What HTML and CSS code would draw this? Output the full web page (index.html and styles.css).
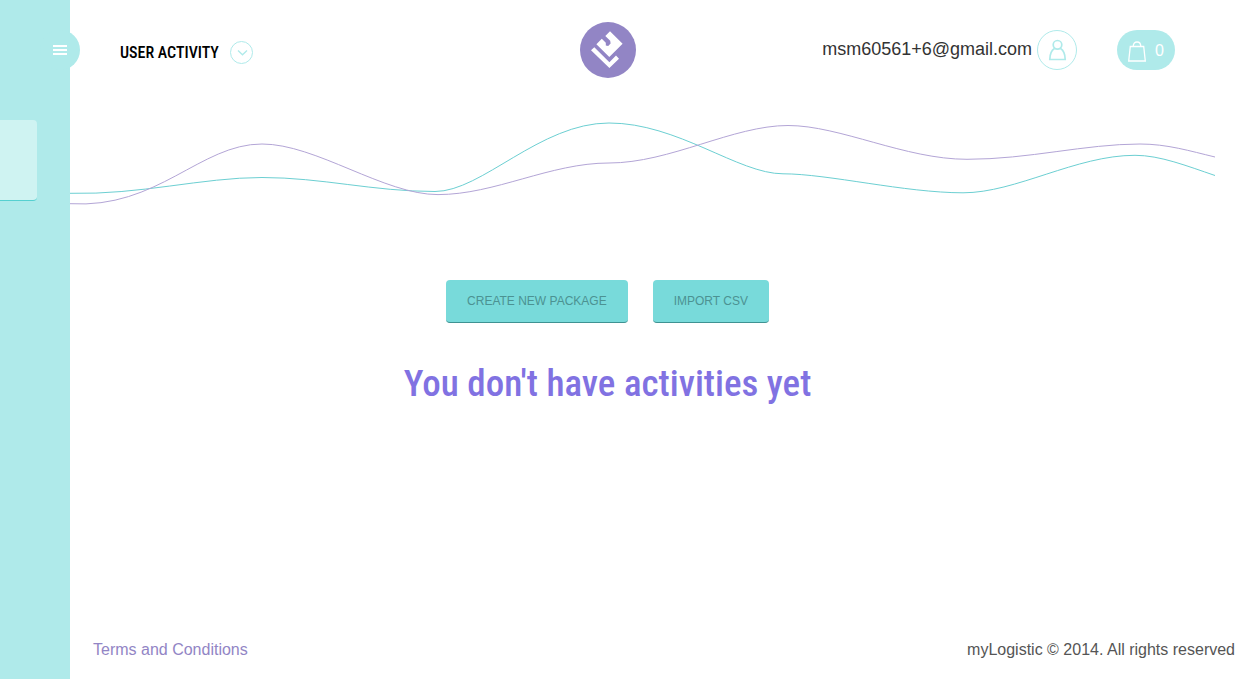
FILE: index.html
```html
<!DOCTYPE html>
<html lang="en">
<head>
<meta charset="utf-8">
<meta name="viewport" content="width=device-width, initial-scale=1">
<title>myLogistic - User activity</title>
<link rel="stylesheet" href="styles.css">
</head>
<body>
<aside class="drawer">
  <button class="drawer-toggle" type="button" aria-label="Open menu">
    <svg class="toggle-icon" viewBox="0 0 14 10" aria-hidden="true"><path d="M0 1h14M0 5h14M0 9h14"/></svg>
  </button>
  <div class="drawer-item"></div>
</aside>
<div class="page">
  <header class="header">
    <div class="title-group">
      <h1 class="title">USER ACTIVITY</h1>
      <button class="title-toggle" type="button" aria-label="Show options">
        <svg class="chevron-icon" viewBox="0 0 23 23" aria-hidden="true"><circle cx="11.5" cy="11.5" r="11"/><path d="M8 9.500l4.500 4.300 4.500-4.300" stroke-width="1.300"/></svg>
      </button>
    </div>
    <a class="logo" href="#" aria-label="myLogistic">
      <svg class="logo-icon" viewBox="0 0 56 56" aria-hidden="true">
        <circle cx="28" cy="28" r="28" fill="#9285c5"/>
        <path fill="#fff" d="M30 9.200 42.600 21.800 29.300 35.100 16.400 22.200 21.800 16.800 25.800 20.800 25.800 23.400 28.200 24 30.600 21.600 30.200 18.800 25.300 13.900z"/>
        <path fill="#fff" d="M14.300 25.300 29.400 40.200 36 33.600 39 36.700 29.400 46 11 28.300z"/>
      </svg>
    </a>
    <div class="account">
      <span class="email">msm60561+6@gmail.com</span>
      <a class="profile" href="#" aria-label="Profile">
        <svg class="profile-icon" viewBox="0 0 40 40" aria-hidden="true"><circle cx="20" cy="20" r="19.500" stroke-width="1"/><circle cx="20.500" cy="14.800" r="4.300"/><path d="M17.500 18.500c-3 1.800-4.600 5-4.700 11h15.400c-.1-6-1.700-9.200-4.700-11"/></svg>
      </a>
      <a class="cart" href="#" aria-label="Cart, 0 items">
        <svg class="cart-icon" viewBox="0 0 18 21" aria-hidden="true"><path d="M2.300 5.500h13.400l1.600 14.500H.7zM5.200 5.500C5.200 2.300 7 1 9 1s3.800 1.300 3.800 4.500"/></svg>
        <span>0</span>
      </a>
    </div>
  </header>
  <main class="content">
    <svg class="chart" viewBox="70 110 1145 110" preserveAspectRatio="none" role="img" aria-label="Activity chart">
      <path class="line-teal" d="M70 193.300C140 195 202 177.500 262 177.500S373 191.500 435 191.500C482 191.500 540 123 609 123S738 173.800 783 173.800S905 192.800 963 192.800C1016 192.800 1076 155.300 1135 155.300C1160 155.300 1187 166 1215 175.500"/>
      <path class="line-violet" d="M70 203.700C158 209 200 144 262 144C316 144 384 194.600 438 194.600C495 194.600 550 163 609 163C670 163 733 125.500 788 125.500C840 125.500 905 159.300 967 159.300S1085 144 1140 144C1167 144 1190 151 1215 157"/>
    </svg>
    <div class="actions">
      <button class="action" type="button">CREATE NEW PACKAGE</button>
      <button class="action" type="button">IMPORT CSV</button>
    </div>
    <h2 class="empty">You don't have activities yet</h2>
  </main>
  <footer class="footer">
    <a class="terms" href="#">Terms and Conditions</a>
    <span>myLogistic © 2014. All rights reserved</span>
  </footer>
</div>
</body>
</html>
```

FILE: styles.css
```css
* {
  box-sizing: border-box;
}

body {
  margin: 0;
  font-family: "Liberation Sans", Arial, sans-serif;
  color: #333;
  background: #fff;
}

button {
  padding: 0;
  border: 0;
  font-family: inherit;
  cursor: pointer;
}

a {
  text-decoration: none;
}

svg {
  display: block;
  fill: none;
}

/* The menu drawer lies over the page's left edge. */
.drawer {
  position: fixed;
  top: 0;
  bottom: 0;
  left: 0;
  width: 70px;
  padding-top: 120px;
  background: #afeaea;
}

.drawer-toggle {
  position: absolute;
  top: 30px;
  right: -10px;
  display: flex;
  align-items: center;
  width: 40px;
  height: 40px;
  padding-left: 13px;
  border-radius: 50%;
  background: #afeaea;
}

.toggle-icon {
  width: 14px;
  height: 10px;
  stroke: #fff;
  stroke-width: 2;
}

.drawer-item {
  width: 37px;
  height: 81px;
  border-bottom: 1px solid #55d0d0;
  border-radius: 0 4px 4px 0;
  background: #cff3f2;
}

.page {
  display: flex;
  flex-direction: column;
  min-height: 100vh;
}

.header {
  display: grid;
  grid-template-columns: 1fr auto 1fr;
  align-items: center;
  height: 100px;
  padding: 0 40px 0 0;
}

.title-group {
  display: flex;
  align-items: center;
  gap: 11px;
  padding: 5px 0 0 120px;
}

.title {
  margin: 0;
  font: 500 16px/20px "Roboto Condensed", "Liberation Sans Narrow", "Liberation Sans", sans-serif;
  color: #000;
  white-space: nowrap;
}

.title-toggle {
  background: none;
}

.chevron-icon {
  width: 23px;
  height: 23px;
  stroke: #afeaea;
}

.logo-icon {
  width: 56px;
  height: 56px;
}

.account {
  display: flex;
  align-items: center;
  justify-content: flex-end;
  padding-right: 40px;
}

.email {
  margin-right: 5px;
  padding-bottom: 2px;
  font-size: 18px;
  line-height: 24px;
}

.profile {
  margin-right: 40px;
}

.profile-icon {
  width: 40px;
  height: 40px;
  stroke: #afeaea;
  stroke-width: 1.700;
}

.cart {
  display: flex;
  align-items: center;
  gap: 9px;
  height: 40px;
  padding: 2px 11px 0;
  border-radius: 20px;
  font-size: 16px;
  color: #fff;
  background: #afeaea;
}

.cart-icon {
  width: 18px;
  height: 21px;
  stroke: #fff;
  stroke-width: 1.300;
}

.content {
  flex: 1;
  padding: 10px 40px 40px 0;
}

.chart {
  width: calc(100% - 70px);
  height: 110px;
  margin-left: 70px;
}

.chart path {
  vector-effect: non-scaling-stroke;
}

.line-teal {
  stroke: #6ccfd2;
}

.line-violet {
  stroke: #b3a5d6;
}

.actions {
  display: flex;
  justify-content: center;
  gap: 25px;
  margin-top: 60px;
}

.action {
  height: 43px;
  padding: 0 21px;
  border-bottom: 1px solid #3f9292;
  border-radius: 4px;
  font-size: 12px;
  color: #4c9292;
  background: #78dada;
}

.empty {
  margin: 37px 0 0;
  font: 500 37px/48px "Roboto Condensed", "Liberation Sans Narrow", "Liberation Sans", sans-serif;
  text-align: center;
  color: #8172e2;
}

.footer {
  display: flex;
  justify-content: space-between;
  padding: 0 20px 19px 93px;
  font-size: 16px;
  line-height: 20px;
  color: #555;
}

.terms {
  color: #9285c5;
}
```
